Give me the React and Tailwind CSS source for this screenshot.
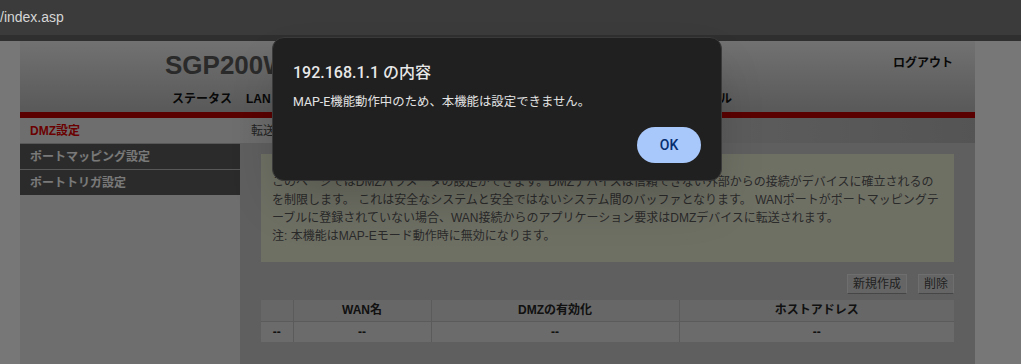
import React from 'react';

const navItems = ['ステータス', 'LAN', 'WAN', 'ワイヤレス設定', 'セキュリティ', '転送設定', 'QoS', 'メンテナンス', 'ツール'];

const sideItems = [
    { label: 'DMZ設定', active: true },
    { label: 'ポートマッピング設定' },
    { label: 'ポートトリガ設定' },
];

const Header = () => (
    <div className="h-[71px] flex flex-col bg-gradient-to-b from-[#e4e4e4] to-[#b2b2b2]">
        <div className="flex justify-between items-start pt-[11px] pl-[145px] pr-[22px]">
            <div className="text-[26px] leading-[26px] font-bold text-[#555] font-['Liberation_Sans',sans-serif]">SGP200W</div>
            <div className="mt-[3px] text-[12px] leading-[16px] font-bold text-[#111]">ログアウト</div>
        </div>
        <nav className="flex gap-[14px] pl-[152px] mt-[13px] text-[12px] leading-[16px] font-bold text-[#111]">
            {navItems.map((item) => (
                <span key={item}>{item}</span>
            ))}
        </nav>
    </div>
);

const Sidebar = () => (
    <div className="w-[220px] shrink-0 bg-[#dddddd]">
        {sideItems.map((item) =>
            item.active ? (
                <div key={item.label} className="h-[25px] flex items-center pl-[10px] text-[12px] font-bold text-[#d40000]">
                    {item.label}
                </div>
            ) : (
                <div key={item.label} className="h-[26px] flex items-center pl-[10px] border-t border-[#b0b0b0] bg-[#565656] text-[12px] font-bold text-[#f2f2f2]">
                    {item.label}
                </div>
            )
        )}
    </div>
);

const Content = () => (
    <div className="flex-1 bg-[#bebebe]">
        {/* title strip */}
        <div className="h-[25px] flex items-center pl-[11px] bg-gradient-to-r from-[#dadada] to-[#a9a9a9] text-[12px] text-[#444]">
            転送 &gt; DMZ設定
        </div>

        <div className="px-[21px] pt-[11px]">
            <div className="bg-[#dee0c9] pl-[11px] pr-[11px] pt-[19px] pb-[17px] text-[12px] leading-[18px] text-[#555] whitespace-nowrap overflow-hidden">
                <p>
                    このページではDMZパラメータの設定ができます。DMZデバイスは信頼できない外部からの接続がデバイスに確立されるの<br />
                    を制限します。 これは安全なシステムと安全ではないシステム間のバッファとなります。 WANポートがポートマッピングテ<br />
                    ーブルに登録されていない場合、WAN接続からのアプリケーション要求はDMZデバイスに転送されます。
                </p>
                <p>注: 本機能はMAP-Eモード動作時に無効になります。</p>
            </div>

            <div className="flex justify-end gap-[11px] mt-[12px]">
                <button className="h-[20px] px-[5px] bg-[#cbcbcb] border border-[#dcdcdc] border-b-[#8c8c8c] text-[12px] leading-[16px] text-[#444]">新規作成</button>
                <button className="h-[20px] px-[5px] bg-[#cbcbcb] border border-[#dcdcdc] border-b-[#8c8c8c] text-[12px] leading-[16px] text-[#444]">削除</button>
            </div>

            <table className="w-full mt-[6px] border-collapse text-[12px] text-[#222] font-bold table-fixed">
                <colgroup>
                    <col className="w-[32px]" />
                    <col className="w-[138px]" />
                    <col className="w-[248px]" />
                    <col />
                </colgroup>
                <thead>
                    <tr className="h-[21px] bg-[#cecece]">
                        <th className="border border-[#b6b6b6] border-t-0 border-l-0"></th>
                        <th className="border border-[#b6b6b6] border-t-0">WAN名</th>
                        <th className="border border-[#b6b6b6] border-t-0">DMZの有効化</th>
                        <th className="border border-[#b6b6b6] border-t-0 border-r-0">ホストアドレス</th>
                    </tr>
                </thead>
                <tbody>
                    <tr className="h-[21px] bg-[#d6d6d6] text-center">
                        <td className="border border-[#b6b6b6] border-l-0 border-b-0">--</td>
                        <td className="border border-[#b6b6b6] border-b-0">--</td>
                        <td className="border border-[#b6b6b6] border-b-0">--</td>
                        <td className="border border-[#b6b6b6] border-r-0 border-b-0">--</td>
                    </tr>
                </tbody>
            </table>
        </div>
    </div>
);

const AlertDialog = () => (
    <div className="absolute left-[272px] top-[37px] w-[450px] h-[144px] rounded-[12px] bg-[#202020] border border-[#3a3a3a] shadow-2xl px-[20px] pt-[23px] flex flex-col font-['Roboto','Noto_Sans_CJK_JP',sans-serif]">
        <div className="text-[16px] leading-[24px] font-medium text-[#e8e8e8]">192.168.1.1 の内容</div>
        <div className="mt-[8px] text-[12.4px] leading-[18px] text-[#e3e3e3]">MAP-E機能動作中のため、本機能は設定できません。</div>
        <div className="flex justify-end mt-[16px]">
            <button className="w-[64px] h-[36px] rounded-full bg-[#a8c7fa] text-[14px] font-medium text-[#062e6f]">OK</button>
        </div>
    </div>
);

export default function App() {
    return (
        <div className="relative w-[1021px] h-[364px] overflow-hidden flex flex-col font-['Liberation_Sans','Noto_Sans_CJK_JP',sans-serif]">
            {/* browser address bar */}
            <div className="h-[35px] shrink-0 bg-[#3b3b3b] flex items-center text-[14px] text-[#d6d6d6]">/index.asp</div>
            <div className="h-[6px] shrink-0 bg-[#2f2f2f]"></div>

            {/* page */}
            <div className="relative flex-1 bg-[#eeeeee] pl-[20px]">
                <div className="w-[955px] h-full flex flex-col">
                    <Header />
                    <div className="h-[6px] bg-[#b40000]"></div>
                    <div className="flex flex-1">
                        <Sidebar />
                        <Content />
                    </div>
                </div>
                <div className="absolute inset-0 bg-black/50"></div>
            </div>

            <AlertDialog />
        </div>
    );
}
